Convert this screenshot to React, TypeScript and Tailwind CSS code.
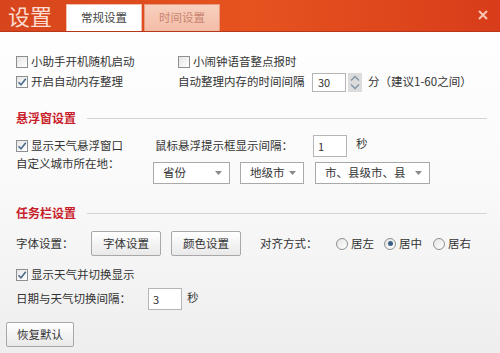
import React from "react";

const font = { fontFamily: '"Noto Sans CJK SC", "Noto Sans", sans-serif' };

function Checkbox({ checked }: { checked?: boolean }) {
  return (
    <span className="w-[12px] h-[12px] border border-[#8e8f8f] bg-gradient-to-br from-[#e6e6e6] to-white flex items-center justify-center shrink-0">
      {checked && (
        <svg width="10" height="10" viewBox="0 0 10 10">
          <path d="M1.5 5.2 L4 7.8 L8.8 1.8" stroke="#4d6b8a" strokeWidth="1.6" fill="none" />
        </svg>
      )}
    </span>
  );
}

function Radio({ checked }: { checked?: boolean }) {
  return (
    <span className="w-[12px] h-[12px] rounded-full border border-[#8e8f8f] bg-gradient-to-br from-[#e4e4e4] to-white flex items-center justify-center shrink-0">
      {checked && <span className="w-[5px] h-[5px] rounded-full bg-[#3c5f87]" />}
    </span>
  );
}

function Select({ label, w }: { label: string; w: string }) {
  return (
    <div className={`${w} h-[22px] border border-[#a9a9a9] bg-white flex items-center pl-[9px] pr-[7px] justify-between`}>
      <span className="text-[#333]">{label}</span>
      <svg width="7" height="4" viewBox="0 0 7 4">
        <path d="M0 0 H7 L3.5 4 Z" fill="#8a8a8a" />
      </svg>
    </div>
  );
}

function Btn({ label, w }: { label: string; w: string }) {
  return (
    <div className={`${w} h-[25px] border border-[#a8a8a8] rounded-[2px] bg-gradient-to-b from-white to-[#e9e9e9] flex items-center justify-center text-[#333]`}>
      {label}
    </div>
  );
}

export default function App() {
  return (
    <div
      className="w-[500px] h-[353px] overflow-hidden relative text-[11.5px] text-[#333] bg-gradient-to-b from-white via-[#fafafa] to-[#eeeeee]"
      style={font}
    >
      {/* title bar */}
      <div className="h-[32px] flex items-end bg-gradient-to-r from-[#d6451c] via-[#e6531f] to-[#d83c1a] border-b border-[#b8361a]">
        <div className="pl-[8px] w-[66px] h-[32px] flex items-center text-[22px] leading-none text-[#fcdcd0]">
          设置
        </div>
        <div className="w-[76px] h-[27px] bg-white flex items-center justify-center text-[11.5px] text-[#444] border-t border-x border-[#f0c0b0]">
          常规设置
        </div>
        <div className="ml-[2px] w-[76px] h-[27px] bg-gradient-to-b from-[#f8d0bf] to-[#f3bca6] flex items-center justify-center text-[11.5px] text-[#c98470] border-t border-x border-[#e89b80]">
          时间设置
        </div>
        <div className="flex-1" />
        <div className="h-[32px] pr-[12px] flex items-center">
          <svg width="10" height="10" viewBox="0 0 10 10">
            <path d="M1 1 L9 9 M9 1 L1 9" stroke="#f7c6b6" strokeWidth="2" />
          </svg>
        </div>
      </div>

      <div className="pl-[16px] pr-[13px] pt-[20px]">
        {/* row 1 */}
        <div className="h-[20px] flex items-center">
          <div className="w-[162px] flex items-center gap-[3px]">
            <Checkbox />
            <span>小助手开机随机启动</span>
          </div>
          <div className="flex items-center gap-[3px]">
            <Checkbox />
            <span>小闹钟语音整点报时</span>
          </div>
        </div>
        {/* row 2 */}
        <div className="h-[20px] flex items-center">
          <div className="w-[162px] flex items-center gap-[3px]">
            <Checkbox checked />
            <span>开启自动内存整理</span>
          </div>
          <span className="w-[134px]">自动整理内存的时间间隔</span>
          <div className="w-[34px] h-[19px] border border-[#b5b5b5] bg-white flex items-center pl-[5px] text-[11px]">
            30
          </div>
          <div className="ml-[2px] w-[14px] h-[19px] bg-[#dcdcdc] flex flex-col items-center justify-center gap-[3px]">
            <svg width="10" height="6" viewBox="0 0 10 6">
              <path d="M1 5.5 L5 1.5 L9 5.5" stroke="#7f93a8" strokeWidth="1.3" fill="none" />
            </svg>
            <svg width="10" height="6" viewBox="0 0 10 6">
              <path d="M1 0.5 L5 4.5 L9 0.5" stroke="#7f93a8" strokeWidth="1.3" fill="none" />
            </svg>
          </div>
          <span className="ml-[6px]">分（建议1-60之间）</span>
        </div>

        {/* section 1 header */}
        <div className="mt-[18px] h-[16px] flex items-center">
          <span className="font-bold text-[12px] text-[#c8202a] w-[71px]">悬浮窗设置</span>
          <div className="flex-1 h-px bg-[#d4d4d4]" />
        </div>

        <div className="mt-[8px] h-[24px] flex items-center">
          <div className="w-[139px] flex items-center gap-[3px]">
            <Checkbox checked />
            <span>显示天气悬浮窗口</span>
          </div>
          <span className="w-[158px]">鼠标悬浮提示框显示间隔：</span>
          <div className="w-[34px] h-[22px] border border-[#b5b5b5] bg-white flex items-center pl-[4px] text-[11px]">
            1
          </div>
          <span className="ml-[9px] -mt-[4px]">秒</span>
        </div>

        <div className="mt-[4px] h-[22px] flex items-start">
          <span className="w-[137px] -mt-[7px]">自定义城市所在地：</span>
          <Select label="省份" w="w-[77px]" />
          <div className="w-[10px]" />
          <Select label="地级市" w="w-[64px]" />
          <div className="w-[11px]" />
          <Select label="市、县级市、县" w="w-[115px]" />
        </div>

        {/* section 2 header */}
        <div className="mt-[21px] h-[16px] flex items-center">
          <span className="font-bold text-[12px] text-[#c8202a] w-[71px]">任务栏设置</span>
          <div className="flex-1 h-px bg-[#d4d4d4]" />
        </div>

        <div className="mt-[10px] h-[25px] flex items-center">
          <span className="w-[75px]">字体设置：</span>
          <Btn label="字体设置" w="w-[70px]" />
          <div className="w-[10px]" />
          <Btn label="颜色设置" w="w-[70px]" />
          <span className="ml-[19px] w-[76px]">对齐方式：</span>
          <div className="flex items-center gap-[3px]">
            <Radio />
            <span>居左</span>
          </div>
          <div className="ml-[10px] flex items-center gap-[3px]">
            <Radio checked />
            <span>居中</span>
          </div>
          <div className="ml-[11px] flex items-center gap-[3px]">
            <Radio />
            <span>居右</span>
          </div>
        </div>

        <div className="mt-[9px] h-[20px] flex items-center gap-[3px]">
          <Checkbox checked />
          <span>显示天气并切换显示</span>
        </div>

        <div className="mt-[3px] h-[22px] flex items-center">
          <span className="w-[132px]">日期与天气切换间隔：</span>
          <div className="w-[34px] h-[22px] border border-[#b5b5b5] bg-white flex items-center pl-[4px] text-[11px]">
            3
          </div>
          <span className="ml-[5px] -mt-[3px]">秒</span>
        </div>

        <div className="mt-[12px] -ml-[10px]">
          <Btn label="恢复默认" w="w-[68px]" />
        </div>
      </div>
    </div>
  );
}
